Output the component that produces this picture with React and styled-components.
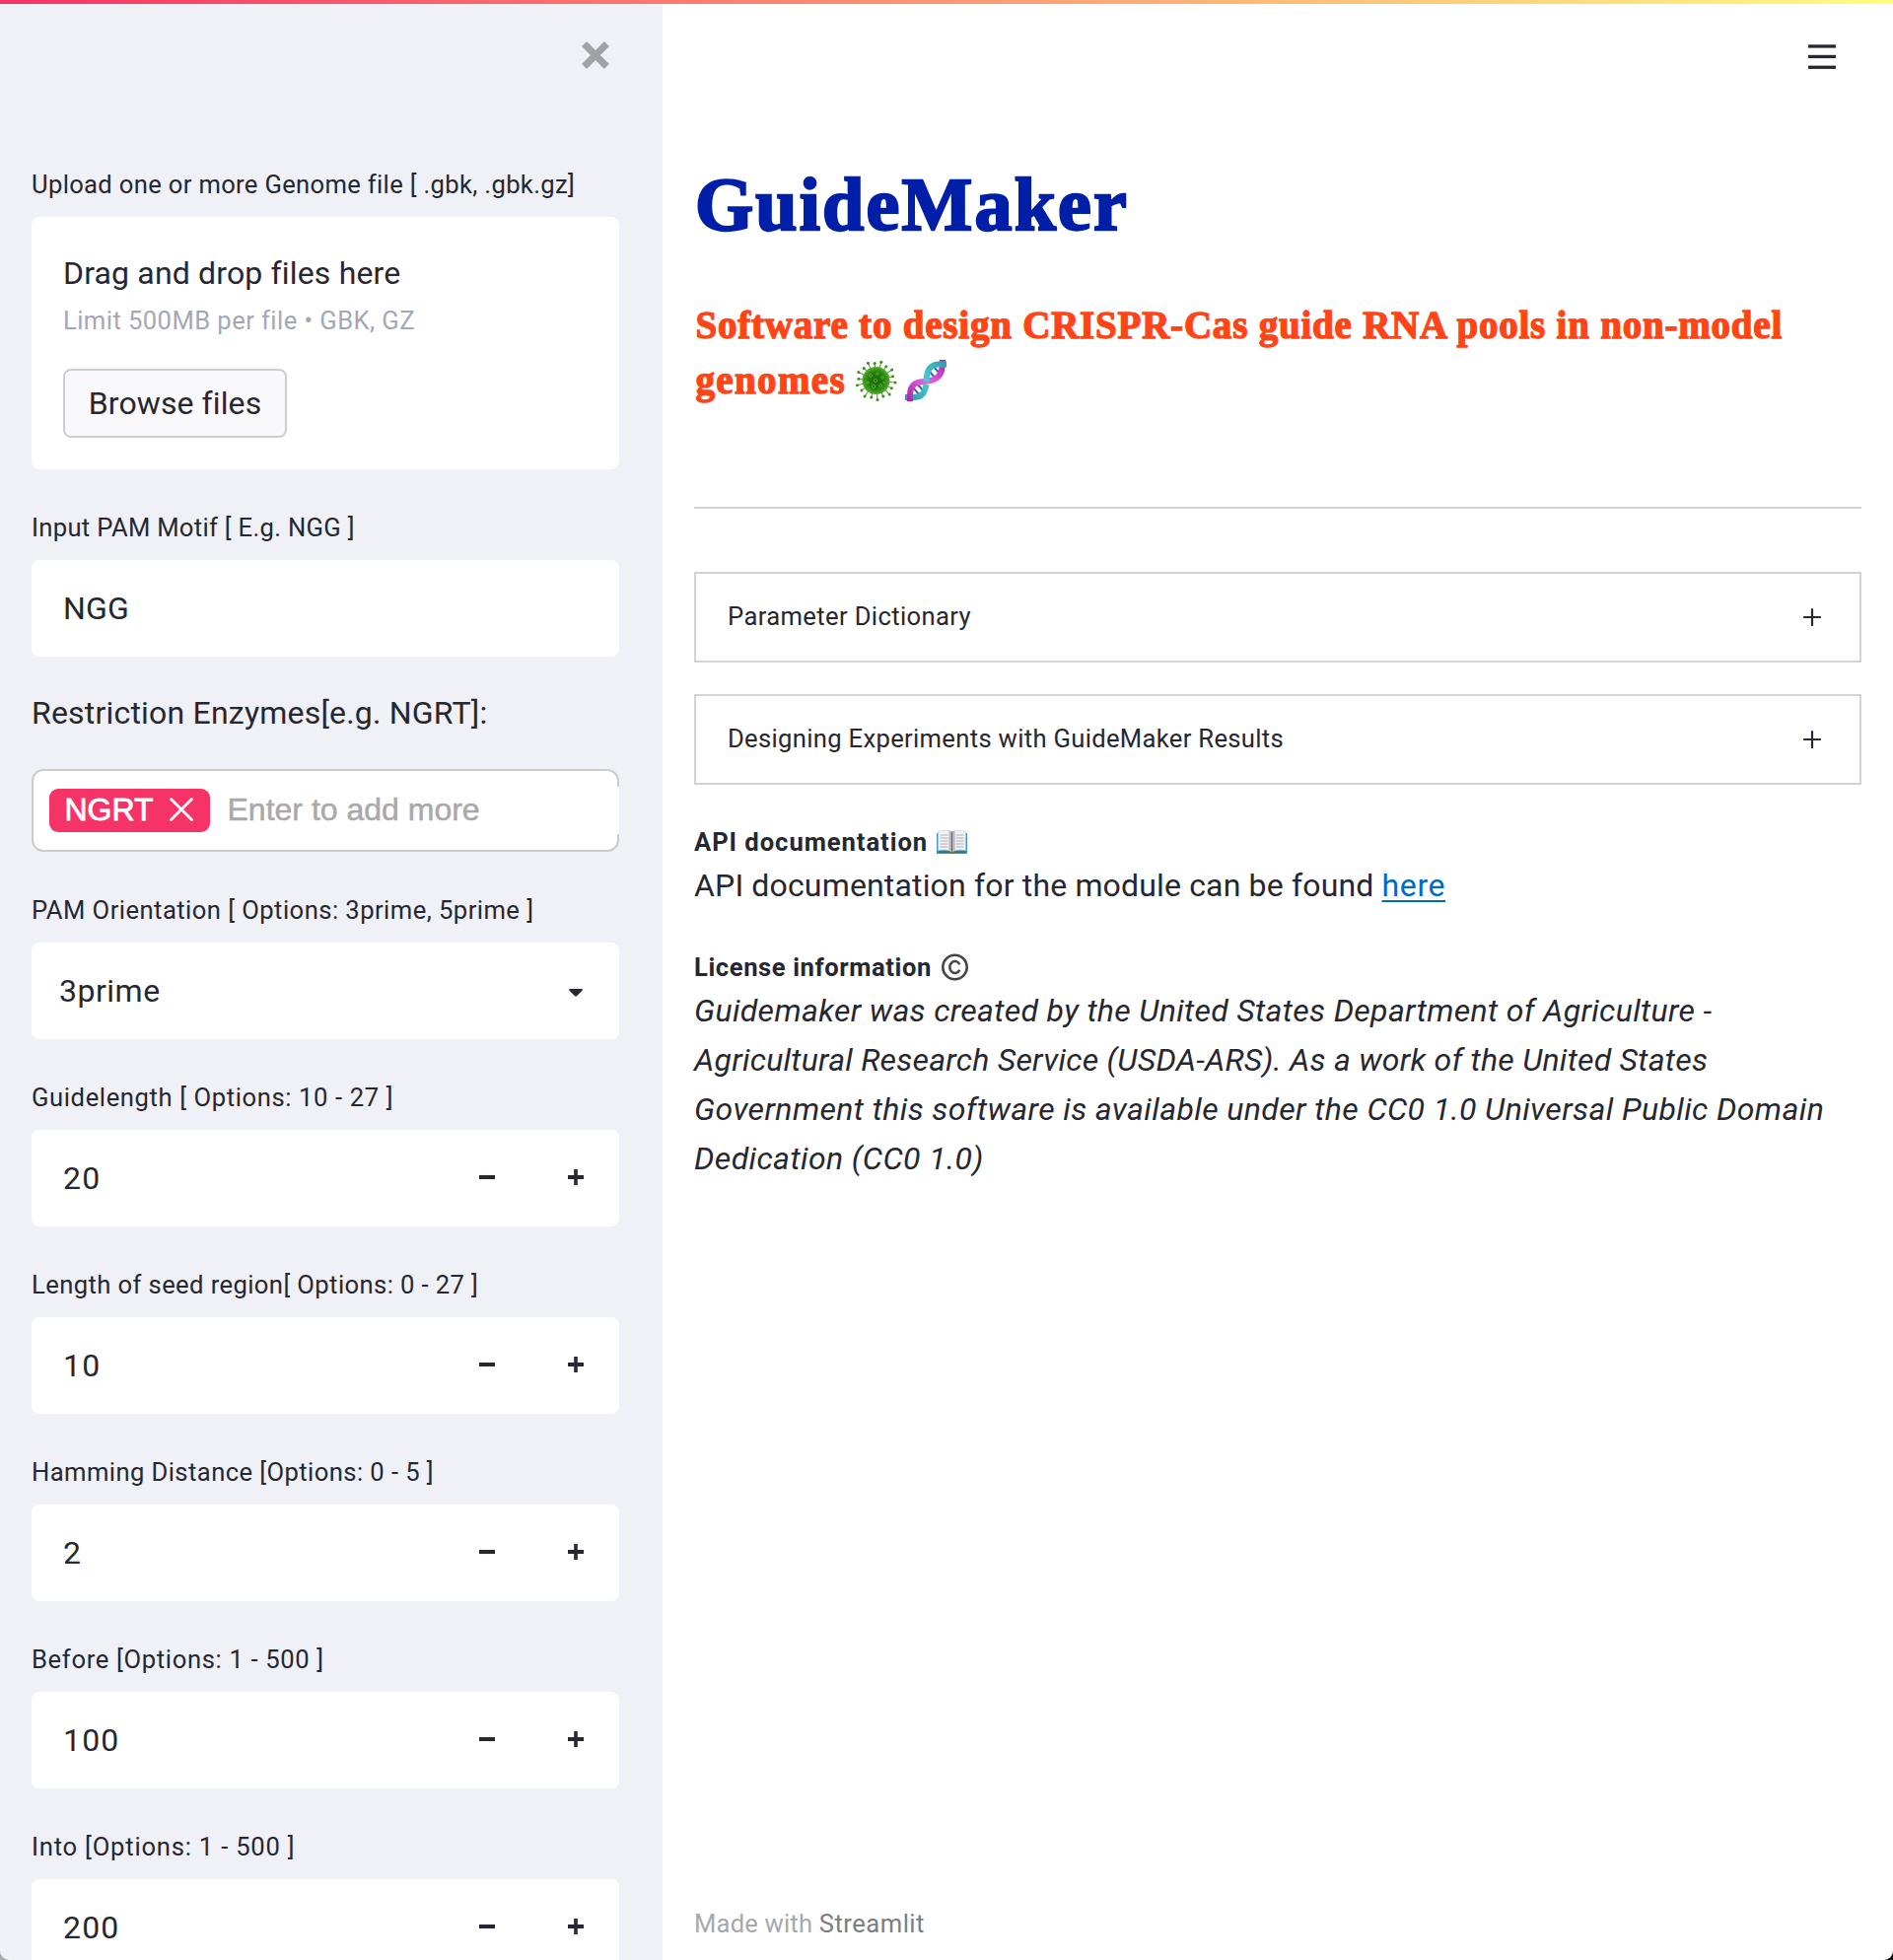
import React from 'react';
import styled, { createGlobalStyle } from 'styled-components';

const ink = '#262730';
const sans = '"Roboto", "Noto Sans", sans-serif';
const serif = '"Liberation Serif", "DejaVu Serif", serif';
const grotesque = '"Liberation Sans", sans-serif';

const GlobalStyle = createGlobalStyle`
  * { box-sizing: border-box; }
  html { background: linear-gradient(to right, #a9a9a9 50%, #000 50%); }
  body { margin: 0; }
`;

const Page = styled.div`
  display: flex;
  flex-direction: column;
  width: 1920px;
  height: 1988px;
  overflow: hidden;
  border-radius: 0 0 9px 10px;
  background: #fff;
  color: ${ink};
  font-family: ${sans};
`;

const Decoration = styled.div`
  flex: none;
  height: 4px;
  background: linear-gradient(to right, #f63366, #fffd80);
`;

const Columns = styled.div`
  display: flex;
  flex: 1;
  min-height: 0;
`;

const Sidebar = styled.aside`
  display: flex;
  flex-direction: column;
  flex: none;
  width: 672px;
  overflow: hidden;
  background: #f0f1f6;
`;

const SidebarTop = styled.div`
  display: flex;
  justify-content: flex-end;
  flex: none;
  height: 164px;
  padding: 38px 54px 0 0;
`;

const IconButton = styled.button`
  display: block;
  padding: 0;
  border: 0;
  background: none;
  line-height: 0;
  height: fit-content;
`;

const Controls = styled.div`
  display: flex;
  flex-direction: column;
  gap: 40px;
  width: 596px;
  margin-left: 32px;
`;

const Spaced = styled.span`
  letter-spacing: ${(p) => p.$ls || 0}px;
`;

const Label = styled.label`
  display: block;
  margin-bottom: 14px;
  font-size: 25.6px;
  line-height: 38px;
  white-space: pre;
`;

const Field = styled.div`
  display: flex;
  align-items: center;
  height: 98px;
  padding: 0 36px 0 ${(p) => p.$left || 32}px;
  border-radius: 8px;
  background: #fff;
  font-size: 32px;
`;

const FieldValue = styled(Spaced)`
  flex: 1;
`;

const Steppers = styled.div`
  display: flex;
  gap: 74px;
  margin-top: -2px;
`;

const Dropzone = styled.div`
  height: 256px;
  padding: 32px;
  border-radius: 8px;
  background: #fff;
`;

const DropTitle = styled.div`
  font-size: 32px;
  line-height: 50px;
`;

const DropHint = styled.div`
  margin: 4px 0 30px;
  color: #a3a8b8;
  font-size: 25.6px;
  line-height: 38px;
`;

const BrowseButton = styled.button`
  display: block;
  width: 227px;
  height: 70px;
  padding: 0 0 1px;
  border: 2px solid #ceced2;
  border-radius: 8px;
  background: #f9f9fb;
  color: ${ink};
  font: 32px ${sans};
`;

const EnzymeTitle = styled.p`
  margin: -8px 0 32px;
  font-size: 32px;
  line-height: 50px;
`;

const TagInput = styled.div`
  display: flex;
  align-items: center;
  height: 84px;
  padding-left: 16px;
  border: 2px solid #ccc;
  border-radius: 12px;
  background: #fff;
  font-family: ${grotesque};
  font-size: 32px;
`;

const Tag = styled.span`
  display: flex;
  align-items: center;
  gap: 16px;
  width: 163px;
  height: 44px;
  padding: 0 0 2px 15.5px;
  border-radius: 9px;
  background: #f63366;
  color: #fff;
  -webkit-text-stroke: 0.8px #fff;
`;

const TagPlaceholder = styled.span`
  flex: 1;
  height: 48px;
  margin-right: -2px;
  padding-left: 17.5px;
  background: #fff;
  color: #a9a9a9;
  line-height: 46px;
  -webkit-text-stroke: 0.5px #a9a9a9;
`;

const Main = styled.main`
  display: flex;
  flex-direction: column;
  flex: 1;
  padding: 40px 32px 18px;
`;

const Toolbar = styled.div`
  display: flex;
  justify-content: flex-end;
  height: 113px;
  padding-right: 26px;
`;

const Title = styled.h1`
  margin: 0 0 45px;
  padding-left: 1px;
  color: #001fa8;
  font: bold 76px/100px ${serif};
  letter-spacing: 2.2px;
  -webkit-text-stroke: 2.4px #001fa8;
`;

const Subtitle = styled.h2`
  margin: 0;
  height: 112px;
  padding-left: 1.5px;
  color: #ff4416;
  font: bold 39px/56px ${serif};
  white-space: nowrap;
  -webkit-text-stroke: 1.3px #ff4416;
`;

const Divider = styled.hr`
  width: 100%;
  height: 2px;
  margin: 100px 0 64px;
  border: 0;
  background: #d4d4d6;
`;

const Expander = styled.div`
  display: flex;
  align-items: center;
  justify-content: space-between;
  height: 92px;
  margin-bottom: ${(p) => p.$after}px;
  padding: 0 39px 2px 32px;
  border: 2px solid #d4d4d6;
  font-size: 25.6px;
`;

const SectionTitle = styled.h3`
  display: flex;
  align-items: center;
  margin: 0;
  font-size: 25.6px;
  font-weight: 700;
  line-height: 38px;
`;

const Body = styled.p`
  margin: 0 0 39px;
  font-size: 32px;
  font-style: ${(p) => (p.$italic ? 'italic' : 'normal')};
  line-height: 50px;
  white-space: nowrap;
`;

const Link = styled.a`
  color: #0068c9;
  letter-spacing: 0.6px;
  text-decoration: underline;
  text-decoration-thickness: 2px;
  text-underline-offset: 4px;
`;

const Footer = styled.footer`
  margin-top: auto;
  color: #a8a8ac;
  font-size: 25.6px;
  line-height: 38px;
  white-space: pre;
`;

const FooterLink = styled.a`
  color: #7d7d83;
  letter-spacing: 0.5px;
`;

const InlineSvg = styled.svg`
  display: inline-block;
  flex: none;
  overflow: visible;
  margin-left: ${(p) => p.$ml || 0}px;
  vertical-align: -8px;
`;

const CloseIcon = () => (
  <svg width="28" height="28" viewBox="0 0 7.86 7.86" fill="#a1a2a6">
    <path d="M1.41 0l-1.41 1.41.72.72 1.78 1.81-1.78 1.78-.72.69 1.41 1.44.72-.72 1.81-1.81 1.78 1.81.69.72 1.44-1.44-.72-.69-1.81-1.78 1.81-1.81.72-.72-1.44-1.41-.69.72-1.78 1.78-1.81-1.78-.72-.72z" />
  </svg>
);

const MenuIcon = () => (
  <svg width="28" height="26" fill={ink}>
    <rect y="1.3" width="28" height="3.3" />
    <rect y="11.8" width="28" height="3.3" />
    <rect y="22.6" width="28" height="3.3" />
  </svg>
);

const MinusIcon = () => (
  <svg width="16" height="16" viewBox="0 0 8 8" fill={ink}><path d="M0 3v2h8v-2h-8z" /></svg>
);

const PlusIcon = () => (
  <svg width="16" height="16" viewBox="0 0 8 8" fill={ink}>
    <path d="M3.1 0v3h-3.1v2h3.1v3h1.8v-3h3.1v-2h-3.1v-3h-1.8z" />
  </svg>
);

const ExpandIcon = () => (
  <svg width="18" height="20" stroke={ink} strokeWidth="2.2" strokeLinecap="round">
    <path d="M9 3v16M1 11h16" />
  </svg>
);

const CaretIcon = () => (
  <svg width="16" height="12" fill={ink}>
    <path d="M2 4h12q1.5 .4 .7 1.6l-5.7 5.6q-1 .8 -2 0l-5.7 -5.6q-.8 -1.2 .7 -1.6z" />
  </svg>
);

const TagCloseIcon = () => (
  <svg width="24" height="24" stroke="#fff" strokeWidth="2.8" strokeLinecap="round">
    <path d="M1.5 1.5l21 21M22.5 1.5l-21 21" />
  </svg>
);

const spikes = Array.from({ length: 18 }, (_, i) => {
  const a = (i * Math.PI) / 9 + 0.1;
  const r = i % 2 ? 17.6 : 19.6;
  return [20.5 + Math.cos(a) * r, 21 + Math.sin(a) * r];
});

const VirusIcon = () => (
  <InlineSvg $ml={10} width="41" height="42" role="img" aria-label="microbe">
    <defs>
      <radialGradient id="virus">
        <stop offset="0" stopColor="#14690a" />
        <stop offset=".6" stopColor="#23800f" />
        <stop offset="1" stopColor="#55ad2d" />
      </radialGradient>
    </defs>
    {spikes.map(([x, y], i) => (
      <g key={i}>
        <line x1="20.5" y1="21" x2={x} y2={y} stroke="#5aa83a" strokeWidth="1.1" />
        <circle cx={x} cy={y} r="1.5" fill="#3b8c22" />
      </g>
    ))}
    <circle cx="20.5" cy="21" r="14" fill="url(#virus)" />
    <g fill="none" stroke="#6dad35" strokeWidth=".8">
      <circle cx="15" cy="16" r="1.5" /><circle cx="22" cy="14" r="1.2" />
      <circle cx="27" cy="18" r="1.3" /><circle cx="20" cy="21" r="1.6" />
      <circle cx="12" cy="23" r="1.2" /><circle cx="18" cy="27" r="1.6" />
      <circle cx="25" cy="26" r="1.4" /><circle cx="29" cy="23" r="1" />
    </g>
  </InlineSvg>
);

const DnaIcon = () => (
  <InlineSvg $ml={9} width="42" height="42" role="img" aria-label="dna">
    <defs>
      <linearGradient id="teal" gradientUnits="userSpaceOnUse" x1="0" y1="42" x2="42" y2="0">
        <stop offset="0" stopColor="#2f93a5" /><stop offset=".5" stopColor="#4cc9d6" /><stop offset="1" stopColor="#2a9fae" />
      </linearGradient>
      <linearGradient id="pink" gradientUnits="userSpaceOnUse" x1="0" y1="42" x2="42" y2="0">
        <stop offset="0" stopColor="#a31fa5" /><stop offset=".5" stopColor="#e565dc" /><stop offset="1" stopColor="#ad22ad" />
      </linearGradient>
    </defs>
    <g stroke="#3d63a8" strokeWidth="2">
      <path d="M7 27l8 9M11 23l8 9M24 11l8 9M29 7l7 8" />
    </g>
    <g fill="none" strokeWidth="6">
      <path d="M0 38H8C18 38 20 33 21.5 25" stroke="url(#teal)" />
      <path d="M5 42V36C5 18 20 24 29 20C36 17 38 12 38 0" stroke="url(#pink)" />
      <path d="M21.500 22C22 10 25 5 34 4.500H42" stroke="url(#teal)" />
    </g>
  </InlineSvg>
);

const BookIcon = () => (
  <InlineSvg $ml={8.5} width="31" height="24" role="img" aria-label="open book">
    <path d="M0 3h31v21H0z" fill="#3f9cc4" />
    <path d="M1.5 21.5h28v1.2h-28z" fill="#285a75" />
    <path d="M13 21h5v2.5q-2.5 1-5 0z" fill="#7d7424" />
    <path d="M1.5 1.5Q10-1 15.5 1.5Q21-1 29.5 1.5V20.5Q20 19 15.5 22Q11 19 1.5 20.5z" fill="#f2f1f4" stroke="#bcbcc4" strokeWidth=".5" />
    <path d="M12.5 .8L15.5 1.5L18.5 .8V20L15.5 22L12.5 20z" fill="#b5b5bb" />
    <path d="M15.5 1.5V22" stroke="#66666c" strokeWidth="1" />
    <path d="M3.5 5h8M3.5 8h8M3.5 11h8M3.5 14h8M3.5 17h8M19.5 5h8M19.5 8h8M19.5 11h8M19.5 14h8M19.5 17h8" stroke="#aaaab3" strokeWidth=".9" />
  </InlineSvg>
);

const CopyrightIcon = () => (
  <InlineSvg $ml={10.5} width="27" height="27" role="img" aria-label="copyright" fill="none" stroke="#444448">
    <circle cx="13.5" cy="13" r="12.2" strokeWidth="2.6" />
    <path d="M18.3 10.3A5.3 6 0 1 0 18.3 15.7" strokeWidth="2.5" />
  </InlineSvg>
);

const steps = [
  { label: 'Guidelength [ Options: 10 - 27 ]', ls: 0.61, value: '20' },
  { label: 'Length of seed region[ Options: 0 - 27 ]', ls: 0.4, value: '10' },
  { label: 'Hamming Distance [Options: 0 - 5 ]', ls: 0.42, value: '2' },
  { label: 'Before [Options: 1 - 500 ]', ls: 0.66, value: '100' },
  { label: 'Into [Options: 1 - 500 ]', ls: 0.79, value: '200' },
];

const NumberField = ({ label, ls, value }) => (
  <div>
    <Label><Spaced $ls={ls}>{label}</Spaced></Label>
    <Field>
      <FieldValue $ls={1.2}>{value}</FieldValue>
      <Steppers>
        <IconButton aria-label="Decrease"><MinusIcon /></IconButton>
        <IconButton aria-label="Increase"><PlusIcon /></IconButton>
      </Steppers>
    </Field>
  </div>
);

export default function App() {
  return (
    <>
      <GlobalStyle />
      <Page>
        <Decoration />
        <Columns>
          <Sidebar>
            <SidebarTop>
              <IconButton aria-label="Close"><CloseIcon /></IconButton>
            </SidebarTop>
            <Controls>
              <div>
                <Label><Spaced $ls={0.33}>Upload one or more Genome file [ .gbk, .gbk.gz]</Spaced></Label>
                <Dropzone>
                  <DropTitle><Spaced $ls={0.16}>Drag and drop files here</Spaced></DropTitle>
                  <DropHint><Spaced $ls={0.43}>Limit 500MB per file • GBK, GZ</Spaced></DropHint>
                  <BrowseButton><Spaced $ls={0.1}>Browse files</Spaced></BrowseButton>
                </Dropzone>
              </div>
              <div>
                <Label><Spaced $ls={0.31}>Input PAM Motif [ E.g. NGG ]</Spaced></Label>
                <Field><FieldValue $ls={0.2}>NGG</FieldValue></Field>
              </div>
              <div>
                <EnzymeTitle><Spaced $ls={0.2}>Restriction Enzymes[e.g. NGRT]:</Spaced></EnzymeTitle>
                <TagInput>
                  <Tag>NGRT<TagCloseIcon /></Tag>
                  <TagPlaceholder>Enter to add more</TagPlaceholder>
                </TagInput>
              </div>
              <div>
                <Label><Spaced $ls={0.45}>PAM Orientation [ Options: 3prime, 5prime ]</Spaced></Label>
                <Field $left={28}><FieldValue $ls={0.5}>3prime</FieldValue><CaretIcon /></Field>
              </div>
              {steps.map((s) => <NumberField key={s.label} {...s} />)}
            </Controls>
          </Sidebar>
          <Main>
            <Toolbar><IconButton aria-label="Menu"><MenuIcon /></IconButton></Toolbar>
            <Title>GuideMaker</Title>
            <Subtitle>
              <Spaced $ls={0.79}>Software to design CRISPR-Cas guide RNA pools in non-model</Spaced>
              <br />
              <Spaced $ls={1.35}>genomes</Spaced><VirusIcon /><DnaIcon />
            </Subtitle>
            <Divider />
            <Expander $after={32}><Spaced $ls={0.37}>Parameter Dictionary</Spaced><ExpandIcon /></Expander>
            <Expander $after={39}><Spaced $ls={0.32}>Designing Experiments with GuideMaker Results</Spaced><ExpandIcon /></Expander>
            <SectionTitle><Spaced $ls={0.95}>API documentation</Spaced><BookIcon /></SectionTitle>
            <Body>
              <Spaced $ls={0.16}>API documentation for the module can be found </Spaced>
              <Link>here</Link>
            </Body>
            <SectionTitle><Spaced $ls={0.59}>License information</Spaced><CopyrightIcon /></SectionTitle>
            <Body $italic>
              <Spaced $ls={0.33}>Guidemaker was created by the United States Department of Agriculture -</Spaced><br />
              <Spaced $ls={0.24}>Agricultural Research Service (USDA-ARS). As a work of the United States</Spaced><br />
              <Spaced $ls={0.39}>Government this software is available under the CC0 1.0 Universal Public Domain</Spaced><br />
              <Spaced $ls={0.4}>Dedication (CC0 1.0)</Spaced>
            </Body>
            <Footer><Spaced $ls={0.18}>Made with </Spaced><FooterLink>Streamlit</FooterLink></Footer>
          </Main>
        </Columns>
      </Page>
    </>
  );
}
